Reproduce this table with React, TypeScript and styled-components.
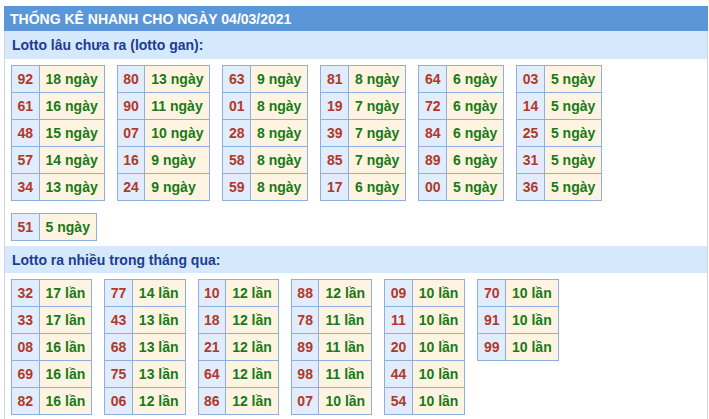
import React from "react";
import styled, { createGlobalStyle } from "styled-components";

const Global = createGlobalStyle`
  html, body { margin: 0; padding: 0; background: #ffffff; }
  body { font-family: "Liberation Sans", Arial, sans-serif; }
`;

const Page = styled.div`
  padding-top: 6px;
  padding-left: 4px;
  width: 704px;
`;

const Panel = styled.div`
  border-left: 1px solid #cdd5df;
  border-right: 1px solid #cdd5df;
  display: flex;
  flex-direction: column;
`;

const Header = styled.div`
  height: 25px;
  background: #5b96d8;
  color: #ffffff;
  font-weight: bold;
  font-size: 14px;
  display: flex;
  align-items: center;
  padding-left: 6px;
  margin-left: -1px;
  margin-right: -1px;
`;

const SubHeader = styled.div<{ $h: number }>`
  height: ${(p) => p.$h}px;
  background: #d6e8fb;
  color: #1b3d92;
  font-weight: bold;
  font-size: 14px;
  display: flex;
  align-items: center;
  padding-left: 7px;
`;

const Grid = styled.div<{ $pb: number }>`
  display: flex;
  flex-wrap: wrap;
  column-gap: 12px;
  row-gap: 12px;
  padding: 6px 24px ${(p) => p.$pb}px 6px;
  align-items: flex-start;
`;

const Table = styled.table`
  border-collapse: collapse;
  font-size: 14px;
  font-weight: bold;
`;

const Cell = styled.td<{ $kind: "num" | "val" }>`
  height: 26px;
  padding: ${(p) => (p.$kind === "num" ? "0 5.5px" : "0 6px")};
  border: 1px solid #8eb0e0;
  background: ${(p) => (p.$kind === "num" ? "#e1edfc" : "#fff4e1")};
  color: ${(p) => (p.$kind === "num" ? "#b0392a" : "#187a17")};
  text-align: ${(p) => (p.$kind === "num" ? "center" : "left")};
  white-space: nowrap;
  line-height: 16px;
`;

type Pair = [string, string];

const gan: Pair[][] = [
  [["92", "18"], ["61", "16"], ["48", "15"], ["57", "14"], ["34", "13"]],
  [["80", "13"], ["90", "11"], ["07", "10"], ["16", "9"], ["24", "9"]],
  [["63", "9"], ["01", "8"], ["28", "8"], ["58", "8"], ["59", "8"]],
  [["81", "8"], ["19", "7"], ["39", "7"], ["85", "7"], ["17", "6"]],
  [["64", "6"], ["72", "6"], ["84", "6"], ["89", "6"], ["00", "5"]],
  [["03", "5"], ["14", "5"], ["25", "5"], ["31", "5"], ["36", "5"]],
  [["51", "5"]],
];

const nhieu: Pair[][] = [
  [["32", "17"], ["33", "17"], ["08", "16"], ["69", "16"], ["82", "16"]],
  [["77", "14"], ["43", "13"], ["68", "13"], ["75", "13"], ["06", "12"]],
  [["10", "12"], ["18", "12"], ["21", "12"], ["64", "12"], ["86", "12"]],
  [["88", "12"], ["78", "11"], ["89", "11"], ["98", "11"], ["07", "10"]],
  [["09", "10"], ["11", "10"], ["20", "10"], ["44", "10"], ["54", "10"]],
  [["70", "10"], ["91", "10"], ["99", "10"]],
];

function StatTable({ rows, unit }: { rows: Pair[]; unit: string }) {
  return (
    <Table>
      <tbody>
        {rows.map(([n, c], i) => (
          <tr key={i}>
            <Cell $kind="num">{n}</Cell>
            <Cell $kind="val">
              {c} {unit}
            </Cell>
          </tr>
        ))}
      </tbody>
    </Table>
  );
}

export default function App() {
  return (
    <>
      <Global />
      <Page>
        <Panel>
          <Header>THỐNG KÊ NHANH CHO NGÀY 04/03/2021</Header>
          <SubHeader $h={28}>Lotto lâu chưa ra (lotto gan):</SubHeader>
          <Grid $pb={5}>
            {gan.map((t, i) => (
              <StatTable key={i} rows={t} unit="ngày" />
            ))}
          </Grid>
          <SubHeader $h={27}>Lotto ra nhiều trong tháng qua:</SubHeader>
          <Grid $pb={10}>
            {nhieu.map((t, i) => (
              <StatTable key={i} rows={t} unit="lần" />
            ))}
          </Grid>
        </Panel>
      </Page>
    </>
  );
}
